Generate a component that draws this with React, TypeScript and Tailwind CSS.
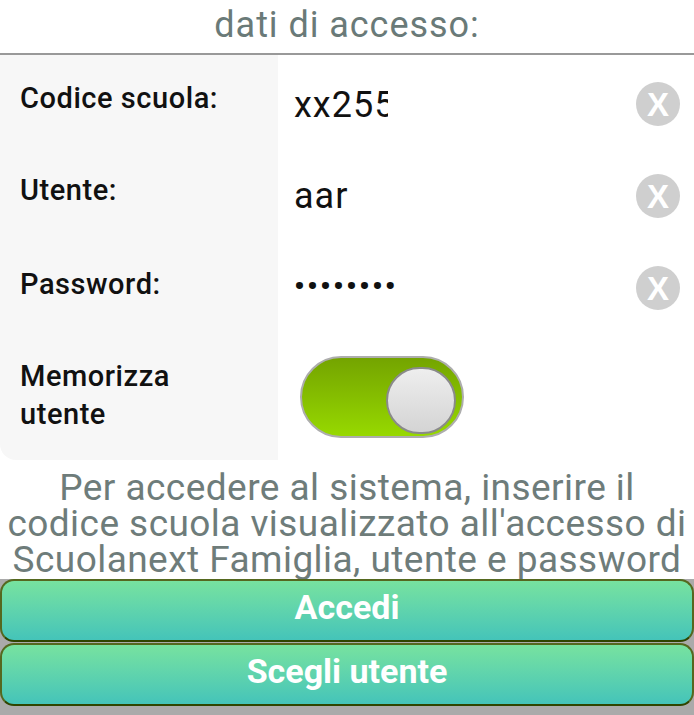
import React from "react";

const rowClass = "flex h-[92px]";
const labelClass = "w-[278px] shrink-0 bg-[#f7f7f7] pl-[20px] font-medium text-[29px] leading-[34px] text-[#111] tracking-[0.55px]";
const valueClass = "pl-[16px] text-[36px] leading-[40px] text-[#111] tracking-[1px]";

function Clear() {
  return (
    <div className="ml-auto mr-[14px] mt-[27px] w-[44px] h-[44px] rounded-full bg-[#cfcfcf] flex items-center justify-center text-white font-bold font-['Liberation_Sans',sans-serif] text-[33px] leading-none">
      X
    </div>
  );
}

export default function App() {
  return (
    <div className="w-[694px] h-[715px] bg-white overflow-hidden flex flex-col font-['Roboto',sans-serif]">
      <div className="h-[55px] shrink-0 border-b-2 border-[#999999] text-center text-[#6a7a78] text-[36px] leading-[50px] tracking-[0.95px]">dati di accesso:</div>
      <div className="h-[405px] shrink-0 flex flex-col">
        <div className={rowClass}>
          <div className={labelClass + " pt-[26px]"}>Codice scuola:</div>
          <div className={valueClass + " pt-[30px]"}><div className="w-[94px] overflow-hidden whitespace-nowrap">xx255</div></div>
          <Clear />
        </div>
        <div className={rowClass}>
          <div className={labelClass + " pt-[26px]"}>Utente:</div>
          <div className={valueClass + " pt-[29px]"}>aar</div>
          <Clear />
        </div>
        <div className={rowClass}>
          <div className={labelClass + " pt-[28px]"}>Password:</div>
          <div className="pl-[16px] pt-[27px] text-[30px] leading-[40px] font-bold text-[#111] tracking-[2.2px] whitespace-nowrap">••••••••</div>
          <Clear />
        </div>
        <div className="flex flex-1">
          <div className={labelClass + " pt-[26px] leading-[38px] rounded-bl-[16px]"}>Memorizza<br />utente</div>
          <div className="pl-[22px] pt-[25px]">
            <div className="w-[164px] h-[82px] rounded-full bg-gradient-to-b from-[#74a400] to-[#97d900] border-2 border-[#adadad] flex justify-end pr-[6px] pt-[9px]">
              <div className="w-[70px] h-[67px] rounded-full border-2 border-[#8a8a8a] bg-gradient-to-b from-[#eeeeee] to-[#d4d4d4]" />
            </div>
          </div>
        </div>
      </div>
      <div className="h-[119px] shrink-0 overflow-hidden text-center text-[#6e7c7a] text-[37px] leading-[36px] pt-[10px] tracking-[0.45px] whitespace-nowrap">
        Per accedere al sistema, inserire il<br />codice scuola visualizzato all'accesso di<br />Scuolanext Famiglia, utente e password
      </div>
      <div className="flex-1 flex flex-col gap-[1px] bg-[#aaaaaa]">
        <div className="h-[63px] bg-gradient-to-b from-[#77e29f] to-[#44c4b9] border-2 border-[#55681f] border-b-[#2f4500] rounded-[14px] flex items-center justify-center pb-[6px] text-white font-bold text-[34px]">Accedi</div>
        <div className="h-[63px] bg-gradient-to-b from-[#77e29f] to-[#44c4b9] border-2 border-[#55681f] border-b-[#2f4500] rounded-[14px] flex items-center justify-center pb-[6px] text-white font-bold text-[34px]">Scegli utente</div>
      </div>
    </div>
  );
}
